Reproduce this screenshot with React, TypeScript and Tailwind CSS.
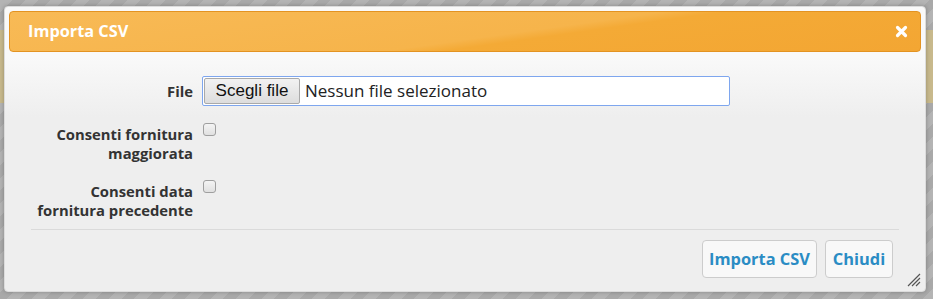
import React from "react";

export default function App() {
  return (
    <div className="relative w-[933px] h-[299px] overflow-hidden bg-[repeating-linear-gradient(135deg,#b4b4b4_0px,#b4b4b4_9px,#a9a9a9_9px,#a9a9a9_18px)] font-['Open_Sans',sans-serif]">
      {/* page content behind the overlay */}
      <div className="mt-[30px] h-[73px] bg-[#c8b98c]" />

      {/* dialog */}
      <div className="absolute left-[4px] top-[6px] w-[922px] h-[286px] rounded-[4px] border border-[#dcdcdc] bg-[linear-gradient(#f9f9f9_0px,#f9f9f9_50px,#eeeeee_110px,#eeeeee_100%)] p-[4px] shadow-[0_0_4px_rgba(0,0,0,0.25)] flex flex-col">
        {/* header */}
        <div className="h-[41px] rounded-[4px] border border-[#e39322] bg-[linear-gradient(172deg,#f8ba56_0%,#f6b44b_55%,#f4aa36_60%,#f3a633_100%)] flex items-center justify-between pl-[18px] pr-[12px]">
          <span className="text-white font-bold text-[16.3px] leading-none">Importa CSV</span>
          <svg width="13" height="13" viewBox="0 0 13 13">
            <path d="M2.5 2.5 L10.5 10.5 M10.5 2.5 L2.5 10.5" stroke="#ffffff" strokeWidth="3.2" strokeLinecap="round" />
          </svg>
        </div>

        {/* form */}
        <div className="mx-[22px] mt-[24px] flex flex-col">
          <div className="flex items-center h-[30px]">
            <div className="w-[162px] text-right font-bold text-[14.8px] text-[#333333]">File</div>
            <div className="ml-[9px] w-[528px] h-[30px] border border-[#7ea6ee] rounded-[2px] bg-white flex items-center px-[1px]">
              <div className="h-[26px] w-[96px] border border-[#a9a9a9] rounded-[2px] bg-[linear-gradient(#f2f2f2,#dddddd)] flex items-center justify-center font-['Liberation_Sans',sans-serif] text-[17px] text-[#111111]">
                Scegli file
              </div>
              <span className="ml-[5px] text-[17px] text-[#222222]">Nessun file selezionato</span>
            </div>
          </div>

          <div className="flex items-start mt-[19px]">
            <div className="w-[162px] text-right font-bold text-[14.8px] leading-[19px] text-[#333333]">
              Consenti fornitura
              <br />
              maggiorata
            </div>
            <div className="ml-[10px] mt-[-2px] w-[13px] h-[13px] rounded-[3px] border border-[#9f9f9f] bg-[linear-gradient(#f4f4f4,#e0e0e0)]" />
          </div>

          <div className="flex items-start mt-[19px]">
            <div className="w-[162px] text-right font-bold text-[14.8px] leading-[19px] text-[#333333]">
              Consenti data
              <br />
              fornitura precedente
            </div>
            <div className="ml-[10px] mt-[-2px] w-[13px] h-[13px] rounded-[3px] border border-[#9f9f9f] bg-[linear-gradient(#f4f4f4,#e0e0e0)]" />
          </div>

          <div className="mt-[9px] h-px bg-[#dadada]" />

          <div className="mt-[10px] flex justify-end gap-[8px] pr-[6px]">
            <button className="h-[38px] w-[115px] rounded-[4px] border border-[#cccccc] bg-[#f8f8f8] text-[#2a8cc4] font-bold text-[16.4px]">
              Importa CSV
            </button>
            <button className="h-[38px] w-[68px] rounded-[4px] border border-[#cccccc] bg-[#f8f8f8] text-[#2a8cc4] font-bold text-[16.4px]">
              Chiudi
            </button>
          </div>
        </div>

        {/* resize handle */}
        <svg className="absolute right-[4px] bottom-[4px]" width="14" height="14" viewBox="0 0 14 14">
          <path d="M13 1 L1 13 M13 5 L5 13 M13 9 L9 13" stroke="#555555" strokeWidth="1.2" />
        </svg>
      </div>
    </div>
  );
}
